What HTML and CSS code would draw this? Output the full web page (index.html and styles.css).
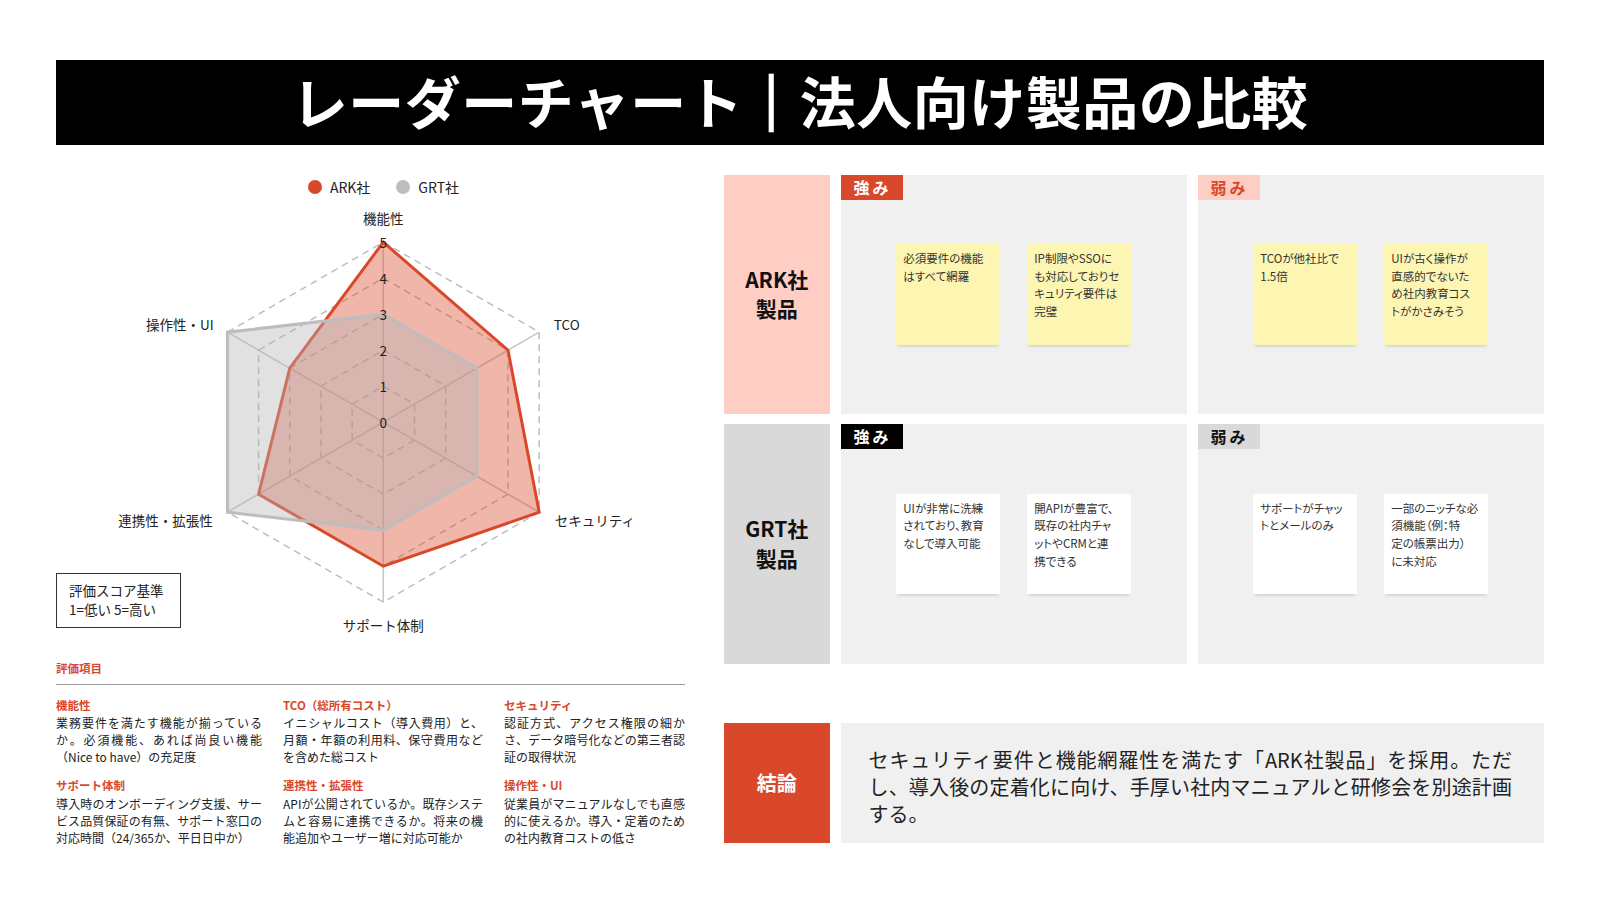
FILE: index.html
```html
<!DOCTYPE html>
<html lang="ja">
<head>
<meta charset="utf-8">
<title>レーダーチャート｜法人向け製品の比較</title>
<link rel="stylesheet" href="styles.css">
</head>
<body>
<div class="slide">
  <header class="title-bar"><h1>レーダーチャート<span class="sep">｜</span>法人向け製品の比較</h1></header>
  <main class="content">
    <section class="left">
      <div class="legend">
        <span class="legend-item"><i class="dot dot-ark"></i>ARK社</span>
        <span class="legend-item"><i class="dot dot-grt"></i>GRT社</span>
      </div>
      <div class="chart">
        <svg class="radar" width="629" height="447" viewBox="0 0 629 447">
          <g transform="translate(327.3 223.2)">
            <g class="grid">
              <polygon points="0,-36 31.18,-18 31.18,18 0,36 -31.18,18 -31.18,-18"/>
              <polygon points="0,-72 62.35,-36 62.35,36 0,72 -62.35,36 -62.35,-36"/>
              <polygon points="0,-108 93.53,-54 93.53,54 0,108 -93.53,54 -93.53,-54"/>
              <polygon points="0,-144 124.71,-72 124.71,72 0,144 -124.71,72 -124.71,-72"/>
              <polygon points="0,-180 155.88,-90 155.88,90 0,180 -155.88,90 -155.88,-90"/>
            </g>
            <g class="axes">
              <line x1="0" y1="0" x2="0" y2="-180"/>
              <line x1="0" y1="0" x2="155.88" y2="-90"/>
              <line x1="0" y1="0" x2="155.88" y2="90"/>
              <line x1="0" y1="0" x2="0" y2="180"/>
              <line x1="0" y1="0" x2="-155.88" y2="90"/>
              <line x1="0" y1="0" x2="-155.88" y2="-90"/>
            </g>
            <polygon class="series-ark" points="0,-180 124.71,-72 155.88,90 0,144 -124.71,72 -93.53,-54"/>
            <polygon class="series-grt" points="0,-108 93.53,-54 93.53,54 0,108 -155.88,90 -155.88,-90"/>
            <g class="ticks">
              <text x="0" y="0">0</text>
              <text x="0" y="-36">1</text>
              <text x="0" y="-72">2</text>
              <text x="0" y="-108">3</text>
              <text x="0" y="-144">4</text>
              <text x="0" y="-180">5</text>
            </g>
            <g class="axis-labels">
              <text class="mid" x="0" y="-204">機能性</text>
              <text class="start" x="170.5" y="-98.5">TCO</text>
              <text class="start" x="171.5" y="97.5">セキュリティ</text>
              <text class="mid" x="0" y="202.5">サポート体制</text>
              <text class="end" x="-170.5" y="97.5">連携性・拡張性</text>
              <text class="end" x="-169.5" y="-98.5">操作性・UI</text>
            </g>
          </g>
        </svg>
        <div class="score-key">評価スコア基準<br>1=低い 5=高い</div>
      </div>
      <section class="criteria">
        <h2>評価項目</h2>
        <div class="criteria-grid">
          <div class="criterion">
            <h3>機能性</h3>
            <p>業務要件を満たす機能が揃っているか。必須機能、あれば尚良い機能（Nice to have）の充足度</p>
          </div>
          <div class="criterion">
            <h3>TCO（総所有コスト）</h3>
            <p>イニシャルコスト（導入費用）と、月額・年額の利用料、保守費用などを含めた総コスト</p>
          </div>
          <div class="criterion">
            <h3>セキュリティ</h3>
            <p>認証方式、アクセス権限の細かさ、データ暗号化などの第三者認証の取得状況</p>
          </div>
          <div class="criterion">
            <h3>サポート体制</h3>
            <p>導入時のオンボーディング支援、サービス品質保証の有無、サポート窓口の対応時間（24/365か、平日日中か）</p>
          </div>
          <div class="criterion">
            <h3>連携性・拡張性</h3>
            <p>APIが公開されているか。既存システムと容易に連携できるか。将来の機能追加やユーザー増に対応可能か</p>
          </div>
          <div class="criterion">
            <h3>操作性・UI</h3>
            <p>従業員がマニュアルなしでも直感的に使えるか。導入・定着のための社内教育コストの低さ</p>
          </div>
        </div>
      </section>
    </section>

    <section class="right">
      <div class="matrix">
        <div class="row-label label-ark">ARK社<br>製品</div>
        <div class="panel">
          <span class="tag tag-strong-ark">強み</span>
          <div class="note note-yellow">必須要件の機能<br>はすべて網羅</div>
          <div class="note note-yellow">IP制限やSSOに<br>も対応しておりセ<br>キュリティ要件は<br>完璧</div>
        </div>
        <div class="panel">
          <span class="tag tag-weak-ark">弱み</span>
          <div class="note note-yellow">TCOが他社比で<br>1.5倍</div>
          <div class="note note-yellow">UIが古く操作が<br>直感的でないた<br>め社内教育コス<br>トがかさみそう</div>
        </div>

        <div class="row-label label-grt">GRT社<br>製品</div>
        <div class="panel">
          <span class="tag tag-strong-grt">強み</span>
          <div class="note note-white">UIが非常に洗練<br>されており、教育<br>なしで導入可能</div>
          <div class="note note-white">開APIが豊富で、<br>既存の社内チャ<br>ットやCRMと連<br>携できる</div>
        </div>
        <div class="panel">
          <span class="tag tag-weak-grt">弱み</span>
          <div class="note note-white">サポートがチャッ<br>トとメールのみ</div>
          <div class="note note-white">一部のニッチな必<br>須機能（例：特<br>定の帳票出力）<br>に未対応</div>
        </div>
      </div>

      <div class="conclusion">
        <div class="conclusion-label">結論</div>
        <div class="conclusion-text"><p>セキュリティ要件と機能網羅性を満たす「ARK社製品」を採用。ただし、導入後の定着化に向け、手厚い社内マニュアルと研修会を別途計画する。</p></div>
      </div>
    </section>
  </main>
</div>
</body>
</html>
```

FILE: styles.css
```css
* { box-sizing: border-box; }

html, body {
  margin: 0;
  padding: 0;
  background: #ffffff;
}

body {
  font-family: "Noto Sans CJK JP", "Noto Sans", "Liberation Sans", sans-serif;
  color: #222222;
}

.slide {
  width: 1600px;
  height: 900px;
  padding: 60px 56px 0;
  overflow: hidden;
}

/* ---------- title ---------- */
.title-bar {
  height: 85px;
  padding-bottom: 5px;
  background: #000000;
  display: flex;
  align-items: center;
  justify-content: center;
}

.title-bar h1 {
  margin: 0;
  color: #ffffff;
  font-size: 56px;
  font-weight: 700;
  line-height: 1;
  letter-spacing: 0.5px;
}

.title-bar .sep {
  -webkit-text-stroke: 2.5px #ffffff;
}

/* ---------- layout ---------- */
.content {
  display: grid;
  grid-template-columns: 629px 820.5px;
  column-gap: 38.5px;
  margin-top: 29.5px;
}

.left {
  display: flex;
  flex-direction: column;
}

/* ---------- legend ---------- */
.legend {
  height: 24px;
  display: flex;
  align-items: center;
  justify-content: center;
  gap: 26px;
  padding-left: 26px;
  font-size: 14px;
  color: #222;
}

.legend-item {
  display: flex;
  align-items: center;
  gap: 8px;
}

.dot {
  display: block;
  width: 14px;
  height: 14px;
  border-radius: 50%;
}

.dot-ark { background: #d9482b; }
.dot-grt { background: #bdbdbd; }

/* ---------- chart ---------- */
.chart {
  position: relative;
  height: 447px;
}

.radar {
  display: block;
}

.radar .grid polygon {
  fill: none;
  stroke: #bdbdbd;
  stroke-width: 1.5;
  stroke-dasharray: 7 5;
}

.radar .axes line {
  stroke: #c6c6c6;
  stroke-width: 1.5;
}

.series-ark {
  fill: #d9482b;
  fill-opacity: 0.4;
  stroke: #d9482b;
  stroke-width: 3;
  stroke-linejoin: miter;
}

.series-grt {
  fill: #b3b3b3;
  fill-opacity: 0.4;
  stroke: #bdbdbd;
  stroke-width: 3;
  stroke-linejoin: miter;
}

.radar text {
  font-size: 13.5px;
  fill: #222222;
  dominant-baseline: central;
}

.radar .ticks text { text-anchor: middle; }
.radar .axis-labels .mid { text-anchor: middle; }
.radar .axis-labels .start { text-anchor: start; }
.radar .axis-labels .end { text-anchor: end; }

.score-key {
  position: absolute;
  left: 0;
  top: 374px;
  width: 125px;
  height: 55px;
  padding: 7px 12px;
  border: 1px solid #333333;
  font-size: 13.5px;
  line-height: 19px;
  background: #ffffff;
}

/* ---------- criteria ---------- */
.criteria h2 {
  margin: 14px 0 0;
  padding-bottom: 7px;
  border-bottom: 1px solid #999999;
  font-size: 11.5px;
  line-height: 17px;
  font-weight: 700;
  color: #d9482b;
}

.criteria-grid {
  margin-top: 12px;
  display: grid;
  grid-template-columns: 206px 200px 181px;
  column-gap: 21px;
  row-gap: 12px;
}

.criterion h3 {
  margin: 0 0 1.6px;
  font-size: 11.5px;
  line-height: 17px;
  font-weight: 700;
  color: #d9482b;
}

.criterion p {
  margin: 0;
  font-size: 12px;
  line-height: 16.8px;
  text-align: justify;
  color: #222222;
}

/* ---------- matrix ---------- */
.matrix {
  display: grid;
  grid-template-columns: 106.5px 1fr 1fr;
  grid-auto-rows: 239.5px;
  column-gap: 10.5px;
  row-gap: 10px;
}

.row-label {
  display: flex;
  align-items: center;
  justify-content: center;
  text-align: center;
  font-size: 21px;
  line-height: 29.5px;
  font-weight: 700;
  color: #111111;
}

.label-ark { background: #fecdc4; }
.label-grt { background: #d9d9d9; }

.panel {
  position: relative;
  background: #f0f0f0;
  display: flex;
  align-items: center;
  justify-content: center;
  gap: 27px;
}

.tag {
  position: absolute;
  left: 0;
  top: 0;
  width: 62px;
  height: 25px;
  padding-left: 13px;
  font-size: 16px;
  line-height: 25px;
  font-weight: 700;
  letter-spacing: 3px;
}

.tag-strong-ark { background: #d9482b; color: #ffffff; }
.tag-weak-ark { background: #fecdc4; color: #d9482b; }
.tag-strong-grt { background: #000000; color: #ffffff; }
.tag-weak-grt { background: #d9d9d9; color: #111111; }

.note {
  width: 104px;
  height: 100.5px;
  padding: 6px 6px 6px 7px;
  font-size: 11.5px;
  line-height: 17.7px;
  font-feature-settings: "palt";
  white-space: nowrap;
  color: #333333;
  box-shadow: 0 3px 3px -2px rgba(0, 0, 0, 0.18);
}

.note-yellow { background: #fdf6b3; }
.note-white { background: #ffffff; }

/* ---------- conclusion ---------- */
.conclusion {
  margin-top: 59.5px;
  height: 119.5px;
  display: grid;
  grid-template-columns: 106.5px 1fr;
  column-gap: 10.5px;
}

.conclusion-label {
  background: #d9482b;
  color: #ffffff;
  display: flex;
  align-items: center;
  justify-content: center;
  font-size: 20px;
  font-weight: 700;
}

.conclusion-text {
  background: #f0f0f0;
  display: flex;
  align-items: center;
  padding: 8px 32px 0 28px;
}

.conclusion-text p {
  margin: 0;
  font-size: 20px;
  line-height: 27px;
  text-align: justify;
  color: #222222;
}
```
